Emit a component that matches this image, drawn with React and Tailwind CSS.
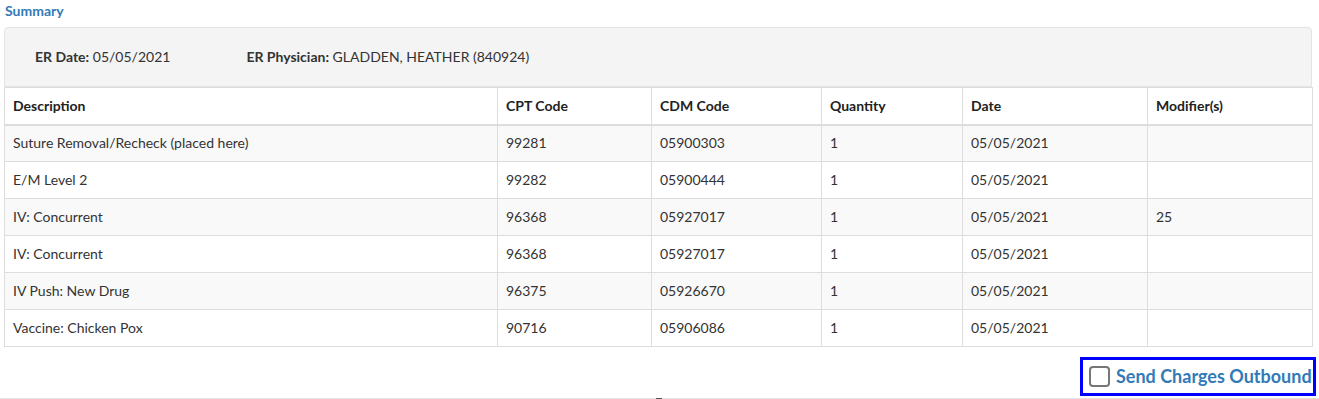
const rows = [
  { desc: "Suture Removal/Recheck (placed here)", cpt: "99281", cdm: "05900303", qty: "1", date: "05/05/2021", mod: "" },
  { desc: "E/M Level 2", cpt: "99282", cdm: "05900444", qty: "1", date: "05/05/2021", mod: "" },
  { desc: "IV: Concurrent", cpt: "96368", cdm: "05927017", qty: "1", date: "05/05/2021", mod: "25" },
  { desc: "IV: Concurrent", cpt: "96368", cdm: "05927017", qty: "1", date: "05/05/2021", mod: "" },
  { desc: "IV Push: New Drug", cpt: "96375", cdm: "05926670", qty: "1", date: "05/05/2021", mod: "" },
  { desc: "Vaccine: Chicken Pox", cpt: "90716", cdm: "05906086", qty: "1", date: "05/05/2021", mod: "" },
];

const headers = ["Description", "CPT Code", "CDM Code", "Quantity", "Date", "Modifier(s)"];
const widths = ["w-[493px]", "w-[154px]", "w-[170px]", "w-[141px]", "w-[185px]", "w-[165px]"];

export default function App() {
  return (
    <div className="w-[1319px] h-[399px] bg-white text-[14px] text-[#333] font-['Lato','Liberation_Sans',sans-serif] relative overflow-hidden">
      <div className="pl-[5px] h-[27px] text-[14px] font-bold text-[#337ab7]">Summary</div>

      <div className="ml-[4px] w-[1308px] h-[60px] bg-[#f4f4f4] border border-[#e3e3e3] rounded-t-[4px] flex items-center pl-[30px] pb-[2px] gap-[76px]">
        <div>
          <span className="font-bold">ER Date:</span> 05/05/2021
        </div>
        <div>
          <span className="font-bold">ER Physician:</span> GLADDEN, HEATHER (840924)
        </div>
      </div>

      <table className="ml-[4px] w-[1308px] border-collapse table-fixed">
        <thead>
          <tr className="h-[37px]">
            {headers.map((h, i) => (
              <th key={h} className={`${widths[i]} text-left font-bold border border-[#ddd] border-b-2 px-[8px] pb-[1px] text-[#222]`}>
                {h}
              </th>
            ))}
          </tr>
        </thead>
        <tbody>
          {rows.map((r, i) => (
            <tr key={i} className={`h-[37px] ${i % 2 === 0 ? "bg-[#f9f9f9]" : "bg-white"}`}>
              {[r.desc, r.cpt, r.cdm, r.qty, r.date, r.mod].map((v, j) => (
                <td key={j} className="border border-[#ddd] px-[8px] pb-[1px]">
                  {v}
                </td>
              ))}
            </tr>
          ))}
        </tbody>
      </table>

      <div className="flex justify-end pr-[3px] mt-[10px]">
        <label className="h-[39px] w-[236px] border-[3px] border-[#0000ff] flex items-center gap-[6px] pl-[6px] cursor-pointer">
          <span className="w-[21px] h-[21px] rounded-[4px] border-2 border-[#767676] bg-white"></span>
          <span className="text-[18px] font-bold text-[#337ab7]">Send Charges Outbound</span>
        </label>
      </div>

      <div className="absolute left-0 right-0 bottom-0 h-[1px] bg-[#e2e2e2]">
        <div className="absolute left-[656px] top-0 w-[6px] h-[2px] bg-[#555]"></div>
      </div>
    </div>
  );
}
